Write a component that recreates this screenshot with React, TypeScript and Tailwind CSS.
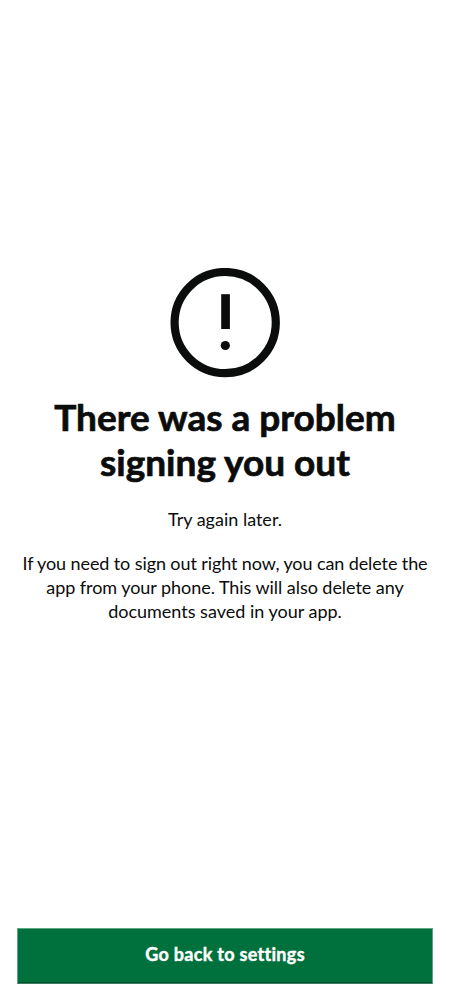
import React from "react";

function ErrorIcon() {
  return (
    <svg className="h-[110px] w-[110px] shrink-0" viewBox="0 0 110 110" aria-hidden="true">
      <circle cx="55.2" cy="54.6" r="50.6" fill="none" stroke="#0b0c0c" strokeWidth="8.2" />
      <rect x="51.2" y="26.2" width="8.7" height="34.8" fill="#0b0c0c" />
      <circle cx="55.3" cy="77.5" r="4.6" fill="#0b0c0c" />
    </svg>
  );
}

export default function App() {
  return (
    <div className="flex h-[1000px] w-[450px] flex-col bg-white pb-4 font-['Lato',sans-serif] text-[#0b0c0c] [font-variant-ligatures:none]">
      <main className="flex grow flex-col items-center pt-[268px] text-center">
        <ErrorIcon />
        <h1 className="mt-4 text-[37px] leading-[45px] font-bold whitespace-nowrap [-webkit-text-stroke:0.7px_#0b0c0c]">
          <span className="block">There was a problem</span>
          <span className="block">signing you out</span>
        </h1>
        <p className="mt-[23px] text-[18px] leading-6">Try again later.</p>
        <p className="mt-5 text-[18px] leading-6 whitespace-nowrap">
          <span className="block tracking-[-0.1px]">If you need to sign out right now, you can delete the</span>
          <span className="block tracking-[-0.05px]">app from your phone. This will also delete any</span>
          <span className="block">documents saved in your app.</span>
        </p>
      </main>
      <button className="mx-[17px] h-[56px] border border-[#5fa584] border-b-[#3f7d60] bg-[#00703c] text-[18px] leading-6 font-bold tracking-[0.3px] whitespace-nowrap text-white shadow-[inset_0_-1px_#00542f] [-webkit-text-stroke:0.4px_white]">
        <span className="block pb-[5px]">Go back to settings</span>
      </button>
    </div>
  );
}
